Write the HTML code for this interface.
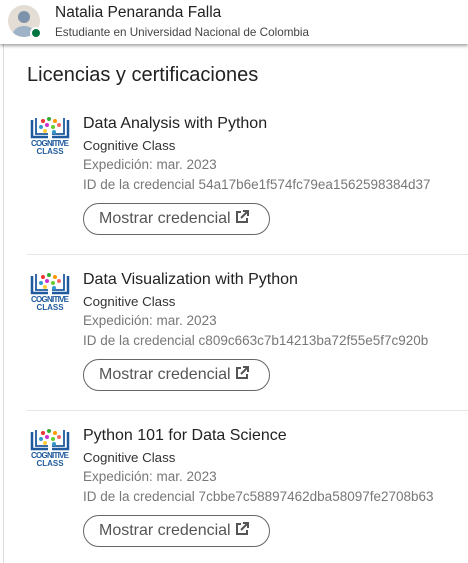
<!DOCTYPE html><html><head><style>
body{margin:0;width:468px;height:563px;background:#fff;font-family:"Liberation Sans",sans-serif;overflow:hidden;position:relative}
.hdr{position:absolute;left:0;top:0;width:468px;height:44px;background:#fff;box-shadow:0 2px 3px rgba(0,0,0,.35);z-index:2}
.av{position:absolute;left:8px;top:5px;width:32px;height:32px;border-radius:50%;background:#e4ddd5;overflow:hidden}
.av:before{content:"";position:absolute;left:10px;top:6px;width:12px;height:12px;border-radius:50%;background:#7c93ab}
.av:after{content:"";position:absolute;left:5px;top:21px;width:22px;height:16px;border-radius:50%;background:#9fb3c8}
.dot{position:absolute;left:30px;top:27px;width:8px;height:8px;border-radius:50%;background:#057642;border:2px solid #fff;z-index:3}
.n{position:absolute;left:55px;top:4px;font-size:15.5px;color:#222}
.s{position:absolute;left:55px;top:26px;font-size:11.7px;color:#444}
.side{position:absolute;left:3px;top:44px;width:1px;height:519px;background:#ddd}
h2{position:absolute;left:27px;top:64px;margin:0;font-weight:normal;font-size:20px;color:#222}
.e{position:absolute;left:0;width:468px}
.logo{position:absolute;left:30px;top:-9px}
.t{position:absolute;left:83px;top:-9px;font-size:16px;color:#222}
.c{position:absolute;left:83px;top:14px;font-size:13.3px;color:#333}
.g{position:absolute;left:83px;font-size:13.5px;color:#777;white-space:nowrap}
.b{position:absolute;left:83px;top:79px;width:185px;height:30px;border:1px solid #666;border-radius:16px;font-size:16px;color:#555;line-height:30px;padding-left:15px;box-sizing:content-box;width:170px}
.b svg{vertical-align:-1px;margin-left:4px}
.sep{position:absolute;left:27px;width:441px;height:1px;background:#e5e5e5}
</style></head><body>
<div class="hdr"><div class="av"></div><div class="dot"></div><div class="n">Natalia Penaranda Falla</div><div class="s">Estudiante en Universidad Nacional de Colombia</div></div>
<div class="side"></div>
<h2>Licencias y certificaciones</h2>
<svg width="0" height="0" style="position:absolute"><defs>
<g id="lg"><path d="M2 5v17h16M38 5v17H22" fill="none" stroke="#1f5a9e" stroke-width="2.5"/><path d="M6 3v16h12M34 3v16H22" fill="none" stroke="#1f5a9e" stroke-width="1.8"/><circle cx="13" cy="6" r="2" fill="#e33"/><circle cx="19" cy="4" r="2" fill="#3a3"/><circle cx="25" cy="6" r="2" fill="#f90"/><circle cx="11" cy="12" r="2" fill="#39c"/><circle cx="17" cy="10" r="2" fill="#c3c"/><circle cx="23" cy="12" r="2" fill="#6c3"/><circle cx="29" cy="10" r="2" fill="#f66"/><circle cx="15" cy="16" r="2" fill="#fc3"/><circle cx="24" cy="17" r="2" fill="#39c"/><text x="20" y="31" font-size="8" font-weight="bold" fill="#1f5a9e" text-anchor="middle" font-family="Liberation Sans Narrow,Liberation Sans" textLength="38">COGNITIVE</text><text x="20" y="39" font-size="8" font-weight="bold" fill="#1f5a9e" text-anchor="middle" font-family="Liberation Sans Narrow,Liberation Sans">CLASS</text></g>
<g id="ex"><path d="M6 2H2v10h10V8" fill="none" stroke="#555" stroke-width="2"/><path d="M8 1h5v5M13 1L6 8" fill="none" stroke="#555" stroke-width="2"/></g>
</defs></svg>
<div class="e" style="top:124px">
<svg class="logo" width="40" height="40" viewBox="0 0 40 40"><use href="#lg"/></svg>
<div class="t">Data Analysis with Python</div><div class="c">Cognitive Class</div><div class="g" style="top:33px">Expedición: mar. 2023</div><div class="g" style="top:53px">ID de la credencial 54a17b6e1f574fc79ea1562598384d37</div><div class="b">Mostrar credencial<svg width="14" height="14" viewBox="0 0 14 14"><use href="#ex"/></svg></div>
</div>
<div class="sep" style="top:254px"></div>
<div class="e" style="top:280px">
<svg class="logo" width="40" height="40" viewBox="0 0 40 40"><use href="#lg"/></svg>
<div class="t">Data Visualization with Python</div><div class="c">Cognitive Class</div><div class="g" style="top:33px">Expedición: mar. 2023</div><div class="g" style="top:53px">ID de la credencial c809c663c7b14213ba72f55e5f7c920b</div><div class="b">Mostrar credencial<svg width="14" height="14" viewBox="0 0 14 14"><use href="#ex"/></svg></div>
</div>
<div class="sep" style="top:410px"></div>
<div class="e" style="top:436px">
<svg class="logo" width="40" height="40" viewBox="0 0 40 40"><use href="#lg"/></svg>
<div class="t">Python 101 for Data Science</div><div class="c">Cognitive Class</div><div class="g" style="top:33px">Expedición: mar. 2023</div><div class="g" style="top:53px">ID de la credencial 7cbbe7c58897462dba58097fe2708b63</div><div class="b">Mostrar credencial<svg width="14" height="14" viewBox="0 0 14 14"><use href="#ex"/></svg></div>
</div>
</body></html>
